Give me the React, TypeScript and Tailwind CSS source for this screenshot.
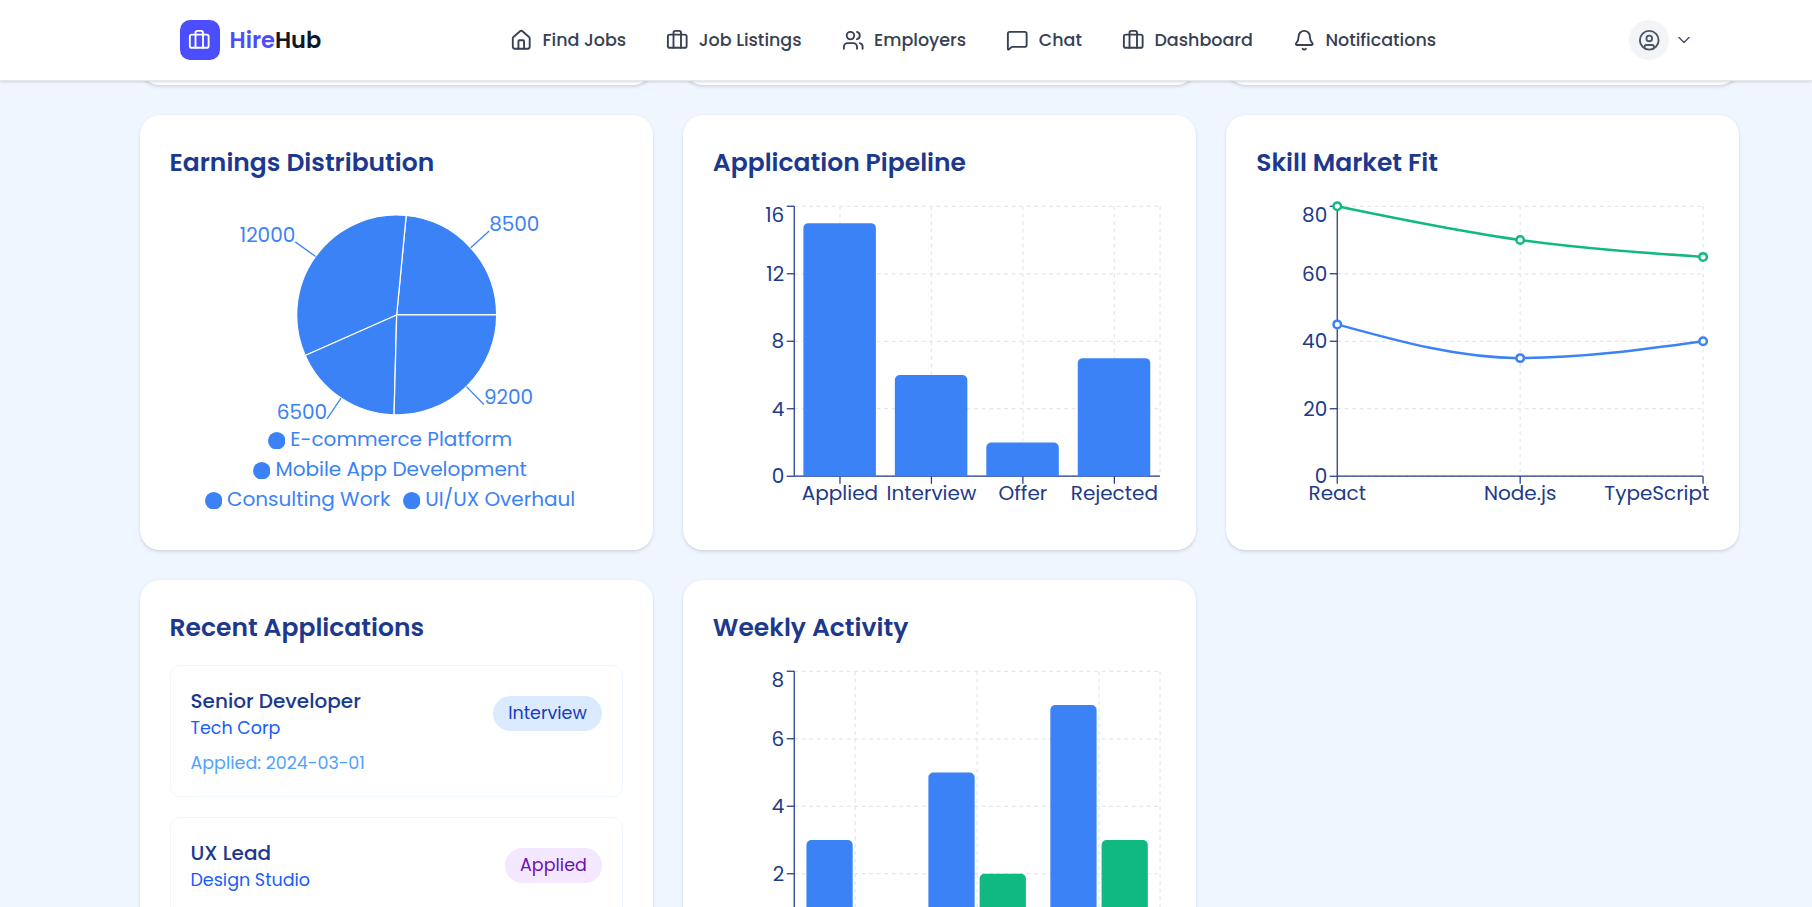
import type { ReactNode } from 'react';
import { Bell, Briefcase, ChevronDown, CircleUser, House, MessageSquare, Users } from 'lucide-react';

const WIDTH = 362.67;
const HEIGHT = 256;
const LEFT = 65;
const RIGHT = WIDTH - 5;
const TOP = 5;
const BOTTOM = 221;
const BLUE = '#3b82f6';
const GREEN = '#10b981';
const NAVY = '#1e3a8a';

const navItems = [
  { label: 'Find Jobs', icon: House },
  { label: 'Job Listings', icon: Briefcase },
  { label: 'Employers', icon: Users },
  { label: 'Chat', icon: MessageSquare },
  { label: 'Dashboard', icon: Briefcase },
  { label: 'Notifications', icon: Bell },
];

const earnings = [
  { name: 'E-commerce Platform', value: 8500 },
  { name: 'Mobile App Development', value: 12000 },
  { name: 'Consulting Work', value: 6500 },
  { name: 'UI/UX Overhaul', value: 9200 },
];

const applications = [
  { role: 'Senior Developer', company: 'Tech Corp', date: '2024-03-01', status: 'Interview', tone: 'bg-blue-100 text-blue-800' },
  { role: 'UX Lead', company: 'Design Studio', date: '2024-03-05', status: 'Applied', tone: 'bg-purple-100 text-purple-800' },
];

function Card({ title, children }: { title: string; children: ReactNode }) {
  return (
    <section className="rounded-[20px] bg-white p-[30px] shadow-[0_1.25px_3.75px_0_rgba(0,0,0,0.1),0_1.25px_2.5px_-1.25px_rgba(0,0,0,0.1)]">
      <h2 className="mb-5 text-[25px] leading-[35px] font-semibold text-blue-900">{title}</h2>
      {children}
    </section>
  );
}

function Chart({ children }: { children: ReactNode }) {
  return (
    <svg className="block h-80 w-full overflow-visible" viewBox={`0 0 ${WIDTH} ${HEIGHT}`} fontSize={16}>
      {children}
    </svg>
  );
}

function Axes({ yTicks, xTicks }: { yTicks: number[]; xTicks: { x: number; label: string; anchor?: 'middle' | 'end' }[] }) {
  const max = yTicks[yTicks.length - 1];
  const toY = (v: number) => BOTTOM - (v / max) * (BOTTOM - TOP);
  const verticals = [...xTicks.map((t) => t.x).filter((x) => x > LEFT && x < RIGHT), RIGHT];
  return (
    <>
      <g stroke="#e2e8f0" strokeDasharray="3 3">
        {yTicks.map((v) => (
          <line key={v} x1={LEFT} x2={RIGHT} y1={toY(v)} y2={toY(v)} />
        ))}
        {verticals.map((x) => (
          <line key={x} x1={x} x2={x} y1={TOP} y2={BOTTOM} />
        ))}
      </g>
      <g stroke={NAVY}>
        <line x1={LEFT} x2={LEFT} y1={TOP} y2={BOTTOM} />
        <line x1={LEFT} x2={RIGHT} y1={BOTTOM} y2={BOTTOM} />
        {yTicks.map((v) => (
          <line key={v} x1={LEFT - 6} x2={LEFT} y1={toY(v)} y2={toY(v)} />
        ))}
        {xTicks.map((t) => (
          <line key={t.label} x1={t.x} x2={t.x} y1={BOTTOM} y2={BOTTOM + 6} />
        ))}
      </g>
      <g fill={NAVY}>
        {yTicks.map((v) => (
          <text key={v} x={LEFT - 8} y={(v === max ? 12 : toY(v)) + 5.68} textAnchor="end">
            {v}
          </text>
        ))}
        {xTicks.map((t) => (
          <text key={t.label} x={t.anchor === 'end' ? WIDTH : t.x} y={BOTTOM + 19.36} textAnchor={t.anchor ?? 'middle'}>
            {t.label}
          </text>
        ))}
      </g>
    </>
  );
}

function Bar({ x, width, value, max, fill }: { x: number; width: number; value: number; max: number; fill: string }) {
  if (value === 0) return null;
  const y = BOTTOM - (value / max) * (BOTTOM - TOP);
  return <path fill={fill} d={`M${x},${y + 4}a4,4 0 0 1 4,-4h${width - 8}a4,4 0 0 1 4,4V${BOTTOM}h${-width}Z`} />;
}

function GroupedBars({ labels, series, yTicks }: { labels: string[]; series: { fill: string; values: number[] }[]; yTicks: number[] }) {
  const band = (RIGHT - LEFT) / labels.length;
  const width = Math.floor((band * 0.8 - 4 * (series.length - 1)) / series.length);
  return (
    <Chart>
      <Axes yTicks={yTicks} xTicks={labels.map((label, i) => ({ label, x: LEFT + band * (i + 0.5) }))} />
      {series.map((s, k) =>
        s.values.map((v, i) => (
          <Bar key={`${k}-${i}`} x={LEFT + band * (i + 0.1) + k * (width + 4)} width={width} value={v} max={yTicks[yTicks.length - 1]} fill={s.fill} />
        )),
      )}
    </Chart>
  );
}

function Line({ values, color }: { values: [number, number, number]; color: string }) {
  const step = (RIGHT - LEFT) / 2;
  const pts = values.map((v, i) => ({ x: LEFT + step * i, y: BOTTOM - (v / 80) * (BOTTOM - TOP) }));
  const s0 = (pts[1].y - pts[0].y) / step;
  const s1 = (pts[2].y - pts[1].y) / step;
  const mid = (Math.sign(s0) + Math.sign(s1)) * Math.min(Math.abs(s0), Math.abs(s1), Math.abs(s0 + s1) / 4);
  const tangents = [(3 * s0 - mid) / 2, mid, (3 * s1 - mid) / 2];
  const third = step / 3;
  const d = [0, 1]
    .map((i) => {
      const a = pts[i];
      const b = pts[i + 1];
      return `C${a.x + third},${a.y + third * tangents[i]} ${b.x - third},${b.y - third * tangents[i + 1]} ${b.x},${b.y}`;
    })
    .join('');
  return (
    <g stroke={color} strokeWidth={2}>
      <path d={`M${pts[0].x},${pts[0].y}${d}`} fill="none" />
      {pts.map((p) => (
        <circle key={p.x} cx={p.x} cy={p.y} r={3} fill="#fff" />
      ))}
    </g>
  );
}

function EarningsPie() {
  const cx = WIDTH / 2;
  const cy = 92;
  const total = earnings.reduce((sum, e) => sum + e.value, 0);
  const at = (angle: number, r: number) => ({ x: cx + r * Math.cos(angle), y: cy - r * Math.sin(angle) });
  let angle = 0;
  const slices = earnings.map((e) => {
    const start = angle;
    angle += (e.value / total) * Math.PI * 2;
    return { ...e, start, end: angle, mid: (start + angle) / 2 };
  });
  return (
    <div className="h-80">
      <svg className="block h-[224px] w-full overflow-visible" viewBox={`0 0 ${WIDTH} 179.2`} fontSize={16}>
        {slices.map((s) => {
          const a = at(s.start, 80);
          const b = at(s.end, 80);
          const from = at(s.mid, 80);
          const to = at(s.mid, 100);
          return (
            <g key={s.name} fill={BLUE}>
              <path d={`M${cx},${cy}L${a.x},${a.y}A80,80 0 0 0 ${b.x},${b.y}Z`} stroke="#fff" />
              <line x1={from.x} y1={from.y} x2={to.x} y2={to.y} stroke={BLUE} />
              <text x={to.x} y={to.y - 0.1} textAnchor={to.x > cx ? 'start' : 'end'}>
                {s.value}
              </text>
            </g>
          );
        })}
      </svg>
      <ul className="px-[6px] text-center text-[20px] leading-[30px] text-[#3b82f6]">
        {earnings.map((e) => (
          <li key={e.name} className="mr-[12.5px] inline-block">
            <svg className="mr-[5px] inline-block size-[17.5px] align-middle" viewBox="0 0 32 32">
              <circle cx="16" cy="16" r="16" fill={BLUE} />
            </svg>
            <span>{e.name}</span>
          </li>
        ))}
      </ul>
    </div>
  );
}

export default function App() {
  return (
    <div className="h-[907px] overflow-hidden bg-blue-50 font-['Poppins','Open_Sans',sans-serif]">
      <header className="relative z-10 h-[81px] border-b border-gray-200 bg-white shadow-[0_1.25px_3.75px_0_rgba(0,0,0,0.1),0_1.25px_2.5px_-1.25px_rgba(0,0,0,0.1)]">
        <div className="flex h-20 items-center justify-between pr-[118px] pl-[179.5px]">
          <div className="flex items-center gap-[10px]">
            <span className="flex size-10 items-center justify-center rounded-[10px] bg-[#4b4dff] text-white">
              <Briefcase size={22.5} />
            </span>
            <span className="pt-0.5 text-[22.5px] font-semibold text-gray-900">
              <span className="text-[#4b4dff]">Hire</span>Hub
            </span>
          </div>
          <nav className="mr-1 flex items-center gap-10 text-[17.5px] font-medium text-gray-700">
            {navItems.map(({ label, icon: Icon }) => (
              <a key={label} className="flex items-center gap-[10px]">
                <Icon size={22.5} />
                {label}
              </a>
            ))}
          </nav>
          <button className="flex items-center gap-[5px] text-gray-600">
            <span className="flex size-10 items-center justify-center rounded-full bg-gray-100">
              <CircleUser size={22.5} />
            </span>
            <ChevronDown size={20} strokeWidth={1.8} />
          </button>
        </div>
      </header>

      <main className="ml-[139.5px] grid w-[1600px] grid-cols-3 gap-[30px]">
        {[0, 1, 2].map((i) => (
          <div key={i} className="-mt-10 h-11 rounded-b-[20px] bg-white shadow-[0_1.25px_3.75px_0_rgba(0,0,0,0.1),0_1.25px_2.5px_-1.25px_rgba(0,0,0,0.1)]" />
        ))}
        <Card title="Earnings Distribution">
          <EarningsPie />
        </Card>
        <Card title="Application Pipeline">
          <GroupedBars
            labels={['Applied', 'Interview', 'Offer', 'Rejected']}
            series={[{ fill: BLUE, values: [15, 6, 2, 7] }]}
            yTicks={[0, 4, 8, 12, 16]}
          />
        </Card>
        <Card title="Skill Market Fit">
          <Chart>
            <Axes
              yTicks={[0, 20, 40, 60, 80]}
              xTicks={[
                { x: LEFT, label: 'React' },
                { x: (LEFT + RIGHT) / 2, label: 'Node.js' },
                { x: RIGHT, label: 'TypeScript', anchor: 'end' },
              ]}
            />
            <Line values={[45, 35, 40]} color={BLUE} />
            <Line values={[80, 70, 65]} color={GREEN} />
          </Chart>
        </Card>
        <Card title="Recent Applications">
          <div className="flex flex-col gap-5">
            {applications.map((a) => (
              <article key={a.role} className="rounded-[10px] border border-blue-50 p-5">
                <div className="flex items-center justify-between">
                  <div>
                    <h3 className="text-[20px] leading-[30px] font-medium text-blue-900">{a.role}</h3>
                    <p className="text-[17.5px] leading-[25px] text-blue-600">{a.company}</p>
                  </div>
                  <span className={`rounded-full px-[15px] py-[5px] text-[17.5px] leading-[25px] ${a.tone}`}>{a.status}</span>
                </div>
                <p className="mt-[10px] text-[17.5px] leading-[25px] text-blue-400">Applied: {a.date}</p>
              </article>
            ))}
          </div>
        </Card>
        <Card title="Weekly Activity">
          <GroupedBars
            labels={['Week 1', 'Week 2', 'Week 3']}
            series={[
              { fill: BLUE, values: [3, 5, 7] },
              { fill: GREEN, values: [0, 2, 3] },
            ]}
            yTicks={[0, 2, 4, 6, 8]}
          />
        </Card>
      </main>
    </div>
  );
}
